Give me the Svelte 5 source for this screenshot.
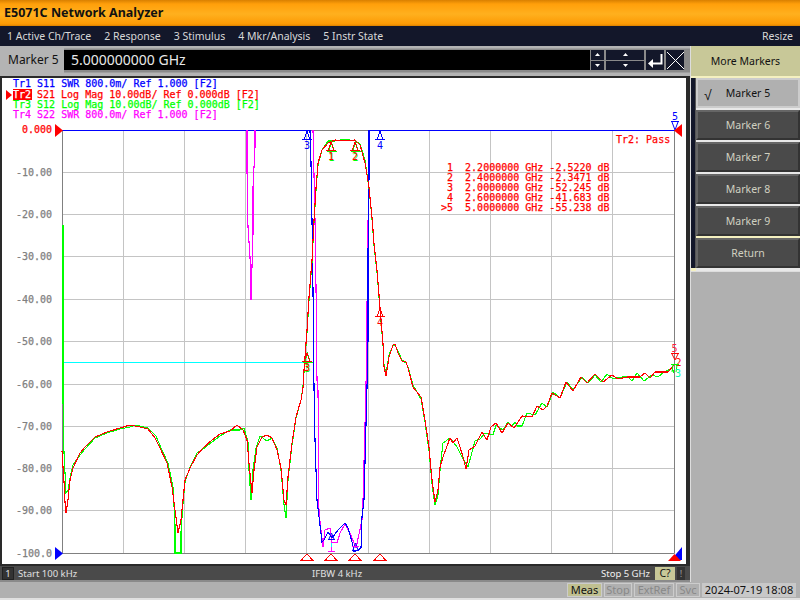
<script lang="ts">
  const menus = ['1 Active Ch/Trace', '2 Response', '3 Stimulus', '4 Mkr/Analysis', '5 Instr State'];
  const softkeys = ['Marker 6', 'Marker 7', 'Marker 8', 'Marker 9'];

  const headers = [
    { x: 13, y: 87, color: '#0000ff', text: 'Tr1 S11 SWR 800.0m/ Ref 1.000 [F2]' },
    { x: 37, y: 98, color: '#ff0000', text: 'S21 Log Mag 10.00dB/ Ref 0.000dB [F2]' },
    { x: 13, y: 108, color: '#00ff00', text: 'Tr3 S12 Log Mag 10.00dB/ Ref 0.000dB [F2]' },
    { x: 13, y: 118, color: '#ff00ff', text: 'Tr4 S22 SWR 800.0m/ Ref 1.000 [F2]' }
  ];

  const markerRows = [
    ' 1  2.2000000 GHz -2.5220 dB',
    ' 2  2.4000000 GHz -2.3471 dB',
    ' 3  2.0000000 GHz -52.245 dB',
    ' 4  2.6000000 GHz -41.683 dB',
    '>5  5.0000000 GHz -55.238 dB'
  ];

  const gridX = [123.5, 184.5, 245.5, 306.5, 368.5, 429.5, 490.5, 551.5, 612.5];
  const scale = [
    { y: 172.5, t: '-10.00' },
    { y: 214.5, t: '-20.00' },
    { y: 256.5, t: '-30.00' },
    { y: 299.5, t: '-40.00' },
    { y: 341.5, t: '-50.00' },
    { y: 384.5, t: '-60.00' },
    { y: 426.5, t: '-70.00' },
    { y: 468.5, t: '-80.00' },
    { y: 510.5, t: '-90.00' }
  ];

  const red =
    '62,451 64,482 65,502 66,513 68,500 70,480 73,468 80,453 85,447 95,437 107,432 120,428 130,425 140,427 148,429 155,438 160,448 167,463 172,487 175,510 178,533 181,520 183,500 185,480 190,468 197,455 203,448 212,440 220,434 230,431 237,425 243,430 247,440 249,463 252,493 254,470 257,447 262,437 267,435 272,438 277,450 281,468 284,500 286,505 288,477 292,443 296,417 301,400 303,388 304,370 307,330 309,297 312,260 314,220 316,188 318,163 322,150 328,143 335,140 345,141 355,140 360,145 365,163 369,187 372,217 374,243 377,270 380,307 383,343 384,367 386,376 389,357 393,345 395,344 398,353 402,361 406,362 408,368 413,387 421,397 425,420 429,447 432,480 435,502 438,490 440,467 443,457 450,438 453,443 457,438 460,447 463,457 466,469 469,450 475,446 482,432 487,440 491,427 496,423 502,433 508,423 514,428 522,416 532,417 537,406 543,410 547,406 552,393 560,398 566,382 573,391 581,377 587,383 595,374 603,382 612,375 618,379 627,377 640,377 645,373 650,378 655,372 668,372 674,365';
  const green =
    '63,225 63,400 64,453 66,493 68,490 70,478 73,465 80,455 85,449 95,438 107,433 120,429 130,427 136,425 148,428 156,436 161,448 168,463 173,487 175,525 175,553 181,553 181,532 183,503 185,482 190,467 197,453 203,449 212,442 220,436 230,430 240,430 244,428 248,442 249,470 251,500 253,470 256,448 260,436 267,441 272,438 277,448 281,470 284,505 286,518 288,480 292,445 296,418 301,400 303,386 304,372 307,332 309,300 312,262 314,222 316,190 318,165 322,150 328,141 335,141 345,139 355,141 360,144 365,160 369,188 372,219 374,245 377,272 380,309 383,345 384,365 386,374 389,355 393,346 395,345 398,351 402,360 406,363 408,367 413,385 421,399 425,422 429,450 432,484 435,505 438,495 440,470 443,443 450,438 457,447 462,457 468,467 475,441 480,439 485,433 493,435 496,425 503,430 508,422 512,426 515,422 517,426 522,426 527,413 535,415 542,403 547,407 553,392 560,398 567,382 573,390 582,377 588,383 595,375 601,382 607,374 613,379 627,376 632,381 637,373 644,381 652,375 658,377 663,373 672,368 674,373';
  const blue =
    '310,130 311,163 312,220 313,290 314,387 315,440 317,500 319,517 322,542 324,540 328,532 332,538 338,530 345,523 348,528 352,542 354,552 358,550 361,548 362,517 364,500 367,387 368,340 368,253 369,177 369,130';
  const magenta =
    '313,130 315,220 316,287 317,380 318,390 319,513 323,547 325,530 330,528 332,542 337,543 340,533 345,524 350,533 356,548 362,520 363,500 366,387 367,307 368,223 369,177 369,130';
  const spike =
    '247,130 247,170 248,227 250,257 251,283 251,300 253,233 253,187 255,147 255,130';

  // apex position, digit below the triangle
  const markers = [
    { x: 331, y: 142, n: '1', c: '#00ff00', dx: 0.5, dy: 1 },
    { x: 355, y: 142, n: '2', c: '#00ff00', dx: 0.5, dy: 1 },
    { x: 307, y: 353, n: '3', c: '#00ff00', dx: 0.5, dy: 1 },
    { x: 331, y: 142, n: '1', c: '#ff0000' },
    { x: 355, y: 142, n: '2', c: '#ff0000' },
    { x: 307, y: 353, n: '3', c: '#ff0000' },
    { x: 380, y: 308, n: '4', c: '#ff0000' },
    { x: 307, y: 131, n: '3', c: '#0000ff' },
    { x: 380, y: 131, n: '4', c: '#0000ff' }
  ];
  const bottomTicks = [307, 331, 355, 380];
</script>

<div class="analyzer">
  <header class="title">E5071C Network Analyzer</header>
  <nav class="menu">
    {#each menus as m}<span>{m}</span>{/each}
    <span class="resize">Resize</span>
  </nav>

  <div class="body">
    <div class="left">
      <div class="entry">
        <span class="entry-label">Marker 5</span>
        <div class="entry-value">5.000000000 GHz</div>
        <div class="steppers">
          <div class="stack">
            <button class="step"><svg width="5" height="3"><path d="M0 3h5L2.500 0z" fill="#fff" /></svg></button>
            <button class="step"><svg width="5" height="3"><path d="M0 0h5L2.500 3z" fill="#fff" /></svg></button>
          </div>
          <div class="stack wide">
            <button class="step"><svg width="5" height="3"><path d="M0 3h5L2.500 0z" fill="#fff" /></svg></button>
            <button class="step"><svg width="5" height="3"><path d="M0 0h5L2.500 3z" fill="#fff" /></svg></button>
          </div>
          <button class="icon-btn">
            <svg width="17" height="17" viewBox="0 0 17 17">
              <path d="M14.500 2v9.500H5" fill="none" stroke="#fff" stroke-width="2" />
              <path d="M6 7v9l-5-4.500z" fill="#fff" />
            </svg>
          </button>
          <button class="icon-btn">
            <svg width="17" height="17" viewBox="0 0 17 17">
              <path d="M0 0l17 17M17 0L0 17" stroke="#fff" stroke-width="1" />
            </svg>
          </button>
        </div>
      </div>

      <div class="chart">
        <svg width="684" height="486" viewBox="2 78 684 486">
          <!-- grid -->
          {#each gridX as x}<line x1={x} x2={x} y1="131" y2="553" class="grid" />{/each}
          {#each scale as s}<line x1="63" x2="674" y1={s.y} y2={s.y} class="grid" />{/each}
          <path d="M62.500 130V553.500H674.500V130M311 130.500H369" class="frame" />
          <path d="M62 130.500H311M369 130.500H675" class="top" />

          <line x1="62" x2="304" y1="362.500" y2="362.500" stroke="#00ffff" />

          <!-- traces -->
          <polyline points={magenta} class="trace" stroke="#ff00ff" />
          <polyline points={spike} class="trace" stroke="#ff00ff" />
          <polyline points={blue} class="trace" stroke="#0000ff" />
          <polyline points={green} class="trace" stroke="#00ff00" />
          <polyline points={red} class="trace" stroke="#ff0000" />

          <!-- markers -->
          {#each markers as m}
            <g transform="translate({m.x + (m.dx ?? 0)} {m.y + (m.dy ?? 0)})" stroke={m.c} fill="none">
              <path d="M-3 8.500L0 0L3 8.500M-5 8.500H5" shape-rendering="crispEdges" />
              <text x="0" y="18" text-anchor="middle" class="digit" fill={m.c} stroke="none">{m.n}</text>
            </g>
          {/each}

          <!-- markers sitting on the S11/S22 notches -->
          <path d="M331.500 533L329 539M331.500 533L334 539M328 539.500H335" stroke="#0000ff" fill="none" />
          <path d="M331.500 540V551M328 551.500H335" stroke="#ff00ff" fill="none" />
          <path d="M331.500 543V547" stroke="#00ffff" />
          <path d="M355.500 543L353 550M355.500 543L358 550M352 550.500H359" stroke="#0000ff" fill="none" />
          <path d="M352 546.500H359" stroke="#ff00ff" />

          <!-- marker 5 at the stop frequency -->
          <text x="674.500" y="352" text-anchor="middle" class="digit" fill="#ff2040">5</text>
          <path d="M671 353.500H679M672 354L675 360L678 354" stroke="#ff0000" fill="none" />
          <text x="678.500" y="366" text-anchor="middle" class="digit" fill="#ff0000">2</text>
          <path d="M671 364.500H679M673 365L672 372M677 365L676 372" stroke="#00ff00" fill="none" />
          <text x="678" y="377" text-anchor="middle" class="digit" fill="#00ffaa">3</text>
          <text x="675" y="120" text-anchor="middle" class="digit" fill="#0000ff">5</text>
          <path d="M671 121.500H679M672 122L675 130L678 122" stroke="#0000ff" fill="none" />

          {#each bottomTicks as x}
            <path d="M{x - 6} 560.500H{x + 6}L{x} 554z" fill="none" stroke="#ff0000" shape-rendering="crispEdges" />
          {/each}

          <!-- scale -->
          <text x="52" y="133" text-anchor="end" class="mono" fill="#ff0000" stroke="#ff0000">0.000</text>
          {#each scale as s}
            <text x="52" y={s.y + 3} text-anchor="end" class="mono" fill="#808080" stroke="#808080">{s.t}</text>
          {/each}
          <text x="52" y="557" text-anchor="end" class="mono" fill="#808080" stroke="#808080">-100.0</text>

          <path d="M55 124L63 130.500L55 137z" fill="#ff0000" />
          <path d="M55 547L63 553.500L55 560z" fill="#0000ff" />
          <path d="M682 124L674 130.500L682 137z" fill="#ff0000" />
          <path d="M682 547V560H671z" fill="#0000ff" />
          <path d="M668 561H681L674.500 554z" fill="#ff0000" />

          <!-- trace header -->
          <path d="M6 90L12 95L6 100z" fill="#ff0000" />
          <rect x="13" y="89" width="19" height="11" fill="#ff0000" />
          <text x="13" y="98" class="mono" fill="#fff" stroke="#fff">Tr2</text>
          {#each headers as h}
            <text x={h.x} y={h.y} class="mono" fill={h.color} stroke={h.color}>{h.text}</text>
          {/each}

          <text x="616" y="143" class="mono" fill="#ff0000" stroke="#ff0000">Tr2: Pass</text>
          {#each markerRows as row, i}
            <text x="441" y={170.500 + i * 10} class="mono" fill="#ff0000" stroke="#ff0000">{row}</text>
          {/each}
        </svg>
      </div>

      <div class="channel">
        <span class="chan-no">1</span>
        <span class="start">Start 100 kHz</span>
        <span class="ifbw">IFBW 4 kHz</span>
        <span class="stop">Stop 5 GHz</span>
        <span class="cal">C?</span>
        <span class="warn">!</span>
      </div>
    </div>

    <aside class="softkeys">
      <div class="key-title">More Markers</div>
      <div class="key-list">
        <div class="scroll"></div>
        <div class="keys">
          <button class="key active"><span class="tick">√</span>Marker 5</button>
          {#each softkeys as k}<button class="key">{k}</button>{/each}
          <button class="key return">Return</button>
        </div>
      </div>
      <div class="blank"></div>
    </aside>
  </div>

  <footer class="status">
    <span class="flag on">Meas</span>
    <span class="flag stop">Stop</span>
    <span class="flag ext">ExtRef</span>
    <span class="flag svc">Svc</span>
    <span class="clock">2024-07-19 18:08</span>
  </footer>
</div>

<style>
  :global(body) {
    margin: 0;
    background: #b0b0b0;
  }

  .analyzer {
    width: 800px;
    height: 600px;
    display: flex;
    flex-direction: column;
    overflow: hidden;
    font-family: "Noto Sans", sans-serif;
    font-size: 10.5px;
    white-space: nowrap;
    background: #b0b0b0;
  }

  .title {
    height: 26px;
    box-sizing: border-box;
    padding: 5px 0 0 4px;
    background: linear-gradient(#d98000 0, #ff9f0a 4px, #ffb01e 14px, #fc9a04 24px, #d98000 26px);
    font-size: 12.5px;
    font-weight: 700;
    line-height: 16px;
    color: #111;
  }

  .menu {
    height: 20px;
    display: flex;
    align-items: center;
    gap: 13px;
    padding: 0 7px;
    background: #13172a;
    color: #d8d8d8;
  }

  .resize {
    margin-left: auto;
  }

  .body {
    flex: 1;
    display: flex;
    min-height: 0;
  }

  .left {
    width: 690px;
    display: flex;
    flex-direction: column;
  }

  .entry {
    height: 30px;
    flex: none;
    box-sizing: border-box;
    display: flex;
    align-items: center;
    padding: 0 0 2px 8px;
    background: linear-gradient(#b4b4b4 0, #b4b4b4 2px, #8a8a8a 3px, #8a8a8a 26px, #b4b4b4 27px);
  }

  .entry-label {
    width: 56px;
    margin-left: -8px;
    padding: 2px 0 2px 8px;
    background: #b4b4b4;
    font-size: 12px;
    line-height: 22px;
    color: #111;
  }

  .entry-value {
    width: 526px;
    height: 20px;
    box-sizing: border-box;
    padding-left: 7px;
    background: #000;
    color: #e8e8e8;
    font-size: 14px;
    line-height: 20px;
  }

  .steppers {
    display: flex;
    height: 20px;
    padding-left: 1px;
    gap: 2px;
  }

  .stack {
    width: 13px;
    display: flex;
    flex-direction: column;
    gap: 1px;
  }

  .stack.wide {
    width: 38px;
  }

  .step,
  .icon-btn {
    padding: 0;
    border: 0;
    background: #13172a;
    display: flex;
    align-items: center;
    justify-content: center;
  }

  .step {
    flex: 1;
  }

  .icon-btn {
    width: 18px;
  }

  .chart {
    width: 684px;
    height: 486px;
    flex: none;
    border: solid #2a2a2a;
    border-width: 2px 4px 2px 2px;
    background: #fff;
  }

  .chart svg {
    display: block;
  }

  .grid {
    stroke: #c4c4c4;
  }

  .frame {
    fill: none;
    stroke: #808080;
    stroke-width: 1;
  }

  .top {
    fill: none;
    stroke: #0000ff;
  }

  .trace {
    fill: none;
    stroke-width: 1.1;
    shape-rendering: crispEdges;
  }

  .mono {
    font-family: "DejaVu Sans Mono", monospace;
    font-size: 10px;
    stroke-width: 0.25;
    white-space: pre;
  }

  .digit {
    font-family: "DejaVu Sans Mono", monospace;
    font-size: 10px;
  }

  .channel {
    height: 14px;
    flex: none;
    display: flex;
    align-items: center;
    background: #4a4a4a;
    color: #e0e0e0;
    font-size: 9.5px;
    border-bottom: 2px solid #8a8a8a;
  }

  .chan-no {
    width: 12px;
    height: 13px;
    margin-left: 2px;
    text-align: center;
    background: #333;
    border: 1px solid #222;
    box-sizing: border-box;
    line-height: 11px;
  }

  .start {
    margin-left: 4px;
    width: 294px;
  }

  .ifbw {
    width: 289px;
  }

  .stop {
    width: 54px;
    color: #f0f0f0;
  }

  .cal {
    width: 20px;
    text-align: center;
    background: #c8c898;
    color: #111;
    font-size: 10.5px;
    line-height: 13px;
  }

  .warn {
    width: 8px;
    margin-left: 2px;
    text-align: center;
    background: #333;
    color: #999;
    line-height: 13px;
  }

  .softkeys {
    width: 110px;
    display: flex;
    flex-direction: column;
    background: #b0b0b0;
    border-left: 1px solid #ddd;
    box-sizing: border-box;
  }

  .key-title {
    height: 30px;
    flex: none;
    display: flex;
    align-items: center;
    justify-content: center;
    background: #c8c898;
    color: #111;
    border-bottom: 2px solid #f4f0c0;
  }

  .key-list {
    display: flex;
    height: 193px;
    flex: none;
    background: #f4f0c0;
  }

  .scroll {
    width: 4px;
    height: 190px;
    background: #13172a;
    border-right: 1px solid #555;
  }

  .keys {
    flex: 1;
    display: flex;
    flex-direction: column;
    gap: 2px;
    padding-bottom: 3px;
    background: #e8e8e8;
  }

  .key {
    height: 30px;
    flex: none;
    position: relative;
    padding: 0;
    border: 2px solid;
    border-color: #666 #333 #333 #666;
    background: #4a4a4a;
    color: #d0d0c0;
    font: 10.5px "Noto Sans", sans-serif;
  }

  .key.active {
    background: #b0b0b0;
    color: #111;
    border-color: #ccc;
  }

  .key.return {
    box-shadow: 0 -2px 0 #f4f0c0;
  }

  .tick {
    position: absolute;
    left: 6px;
    top: 5px;
    font-size: 14px;
    color: #111;
  }

  .blank {
    flex: 1;
    background: #b0b0b0;
    border-top: 1px solid #ddd;
  }

  .status {
    height: 18px;
    flex: none;
    box-sizing: border-box;
    display: flex;
    align-items: center;
    justify-content: flex-end;
    gap: 2px;
    padding: 0 4px 1px 0;
    background: #b0b0b0;
    border-bottom: 2px solid #e0e0e0;
    font-size: 11px;
  }

  .flag {
    height: 14px;
    box-sizing: border-box;
    border: 1px solid #ccc;
    line-height: 12px;
    text-align: center;
    color: #888;
    overflow: hidden;
  }

  .flag.on {
    width: 35px;
    background: #c0c090;
    color: #111;
  }

  .flag.stop {
    width: 28px;
  }

  .flag.ext {
    width: 40px;
  }

  .flag.svc {
    width: 24px;
  }

  .clock {
    width: 94px;
    height: 14px;
    line-height: 13px;
    text-align: center;
    background: #c8c8c8;
    color: #111;
  }
</style>
